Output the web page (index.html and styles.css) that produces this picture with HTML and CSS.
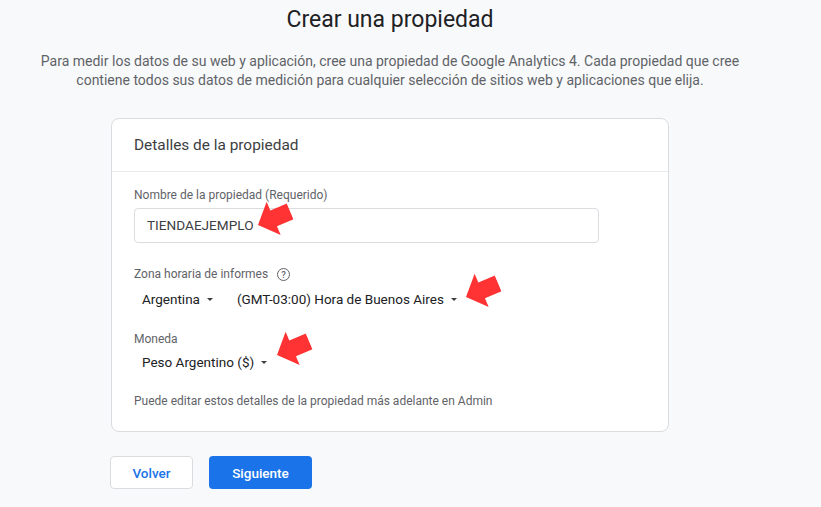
FILE: index.html
```html
<!DOCTYPE html>
<html lang="es">
  <head>
    <meta charset="UTF-8" />
    <title>Crear una propiedad</title>
    <link rel="stylesheet" href="styles.css">
  </head>
  <body>
    <div class="page">
      <h1 class="title">Crear una propiedad</h1>
      <p class="intro">
        Para medir los datos de su web y aplicación, cree una propiedad de Google Analytics 4. Cada propiedad que cree<br />
        contiene todos sus datos de medición para cualquier selección de sitios web y aplicaciones que elija.
      </p>

      <div class="card">
        <div class="card-head">Detalles de la propiedad</div>
        <div class="card-body">
          <div class="field">
            <div class="label">Nombre de la propiedad (Requerido)</div>
            <div class="input">TIENDAEJEMPLO</div>
          </div>

          <div class="field">
            <div class="label">
              Zona horaria de informes
              <span class="help">?</span>
            </div>
            <div class="selects">
              <span class="select">Argentina <span class="caret"></span></span>
              <span class="select">(GMT-03:00) Hora de Buenos Aires <span class="caret"></span></span>
            </div>
          </div>

          <div class="field">
            <div class="label">Moneda</div>
            <div class="selects">
              <span class="select">Peso Argentino ($) <span class="caret"></span></span>
            </div>
          </div>

          <p class="note">Puede editar estos detalles de la propiedad más adelante en Admin</p>
        </div>
      </div>

      <div class="actions">
        <button class="btn btn-back">Volver</button>
        <button class="btn btn-next">Siguiente</button>
      </div>

      <!-- red arrows drawn over the form -->
      <svg class="arrow arrow1" width="35" height="36" viewBox="0 0 35 36"><polygon points="0,18 17,0 17,9.5 35,9.5 35,26.5 17,26.5 17,36" /></svg>
      <svg class="arrow arrow2" width="35" height="36" viewBox="0 0 35 36"><polygon points="0,18 17,0 17,9.5 35,9.5 35,26.5 17,26.5 17,36" /></svg>
      <svg class="arrow arrow3" width="35" height="36" viewBox="0 0 35 36"><polygon points="0,18 17,0 17,9.5 35,9.5 35,26.5 17,26.5 17,36" /></svg>
    </div>
  </body>
</html>
```

FILE: styles.css
```css
body {
  margin: 0;
  background: #f8f9fa;
  font-family: Roboto, "Liberation Sans", sans-serif;
  color: #3c4043;
}
.page {
  position: relative;
  width: 780px;
  height: 507px;
  overflow: hidden;
}
.title {
  margin: 0;
  padding-top: 5px;
  font-size: 23px;
  font-weight: 400;
  line-height: 30px;
  color: #202124;
  text-align: center;
}
.intro {
  margin: 17px 0 0;
  font-size: 14px;
  line-height: 19px;
  color: #5f6368;
  text-align: center;
}
.card {
  width: 556px;
  margin: 28px auto 0;
  background: #fff;
  border: 1px solid #dadce0;
  border-radius: 8px;
}
.card-head {
  height: 52px;
  line-height: 52px;
  padding-left: 22px;
  font-size: 15.4px;
  color: #3c4043;
  border-bottom: 1px solid #e8eaed;
}
.card-body {
  padding: 15px 22px 0;
}
.field {
  margin-bottom: 22px;
}
.field:first-child {
  margin-bottom: 23px;
}
.label {
  display: flex;
  align-items: center;
  gap: 9px;
  height: 16px;
  font-size: 12px;
  color: #5f6368;
}
.help {
  display: inline-flex;
  justify-content: center;
  align-items: center;
  width: 11px;
  height: 11px;
  border: 1.5px solid #5f6368;
  border-radius: 50%;
  font-size: 9.5px;
  font-weight: 500;
}
.input {
  width: 451px;
  height: 33px;
  margin-top: 5px;
  padding-left: 12px;
  line-height: 33px;
  font-size: 13.6px;
  color: #3c4043;
  border: 1px solid #dadce0;
  border-radius: 4px;
}
.selects {
  display: flex;
  gap: 24px;
  margin-top: 7px;
  padding-left: 8px;
  height: 20px;
  align-items: center;
}
.field:last-of-type .selects {
  margin-top: 5px;
}
.select {
  display: inline-flex;
  align-items: center;
  font-size: 13.5px;
  color: #202124;
}
.caret {
  display: inline-block;
  margin-left: 7px;
  border-left: 3.5px solid transparent;
  border-right: 3.5px solid transparent;
  border-top: 3.5px solid #3c4043;
}
.note {
  margin: 2px 0 0;
  padding-bottom: 23px;
  font-size: 12px;
  color: #5f6368;
  line-height: 14px;
}
.actions {
  display: flex;
  gap: 16px;
  margin: 24px 0 0 110px;
}
.btn {
  height: 33px;
  border-radius: 4px;
  font-family: Roboto, "Liberation Sans", sans-serif;
  font-size: 13.5px;
  font-weight: 500;
  cursor: pointer;
}
.btn-back {
  width: 83px;
  background: #fff;
  color: #1a73e8;
  border: 1px solid #dadce0;
}
.btn-next {
  width: 103px;
  background: #1a73e8;
  color: #fff;
  border: none;
}
.arrow {
  position: absolute;
  fill: #ff3333;
  transform: rotate(-23deg);
  transform-origin: 0 18px;
}
.arrow1 {
  left: 258px;
  top: 207px;
}
.arrow2 {
  left: 466px;
  top: 279px;
}
.arrow3 {
  left: 277px;
  top: 337px;
}
```
